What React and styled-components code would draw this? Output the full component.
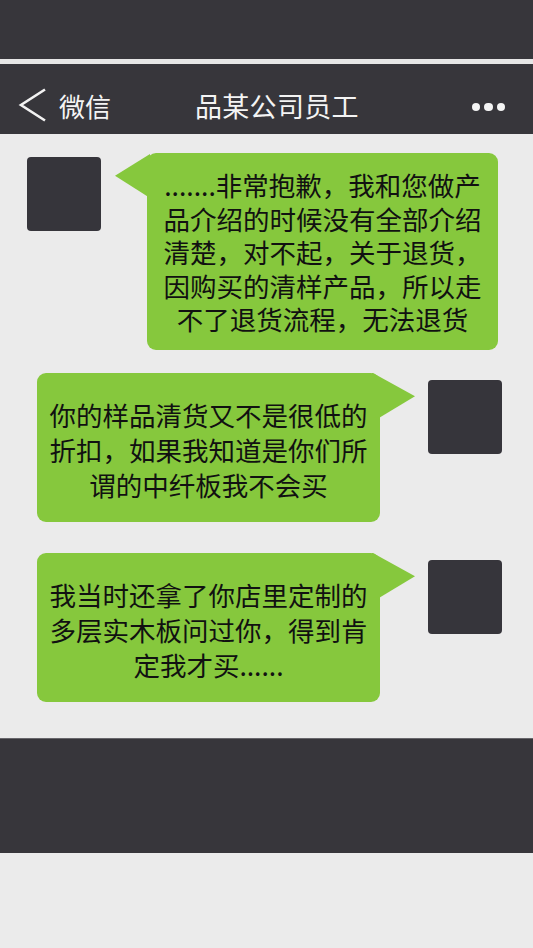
import styled, { createGlobalStyle } from 'styled-components';

const GlobalStyle = createGlobalStyle`
  html, body {
    margin: 0;
    padding: 0;
    background: #ebebeb;
  }
  body {
    font-family: "Noto Sans CJK SC", "Noto Sans", sans-serif;
  }
`

const Screen = styled.div`
  width: 533px;
  height: 948px;
  display: flex;
  flex-direction: column;
  background: #ebebeb;
  overflow: hidden;
`

const StatusBar = styled.div`
  height: 59px;
  background: #37363b;
  border-bottom: 5px solid #e6e6e6;
`

const NavBar = styled.div`
  height: 58px;
  padding: 12px 28px 0 18px;
  display: flex;
  align-items: center;
  background: #37363b;
  color: #f4f4f4;
`

const Back = styled.div`
  display: flex;
  align-items: center;
  gap: 12px;
  font-size: 26px;
`

const Title = styled.div`
  margin-left: 84px;
  font-size: 27px;
  letter-spacing: 0.3px;
`

const More = styled.div`
  margin-left: auto;
  margin-top: 4px;
  display: flex;
  gap: 4px;
`

const Dot = styled.span`
  width: 8.5px;
  height: 8.5px;
  border-radius: 50%;
  background: #f4f4f4;
`

const Chat = styled.div`
  height: 585px;
  padding-top: 19px;
  display: flex;
  flex-direction: column;
  background: #ebebeb;
`

const Row = styled.div`
  display: flex;
  flex-direction: ${p => (p.$mine ? 'row-reverse' : 'row')};
  align-items: flex-start;
  gap: ${p => (p.$mine ? '48px' : '46px')};
  padding: ${p => (p.$mine ? '0 31px 0 37px' : '0 35px 0 27px')};
  margin-top: ${p => p.$top || 0}px;
`

const Avatar = styled.div`
  flex: none;
  width: 74px;
  height: 74px;
  margin-top: ${p => (p.$mine ? '7px' : '4px')};
  border-radius: 4px;
  background: #36353b;
`

const Bubble = styled.div`
  position: relative;
  flex: 1;
  padding: ${p => (p.$mine ? '24px 8px 20px' : '15px 8px 14px')};
  border-radius: 9px;
  background: #86c83d;
  color: #111;
  font-size: 26.5px;
  line-height: ${p => (p.$mine ? '35px' : '33.5px')};
  text-align: center;
  white-space: nowrap;

  &::before {
    content: '';
    position: absolute;
    background: #86c83d;
    ${p => p.$mine
      ? `
        right: -35px;
        top: 0;
        width: 43px;
        height: 45px;
        clip-path: polygon(0 0, 100% 53%, 18% 100%, 0 100%);
      `
      : `
        left: -32px;
        top: 1px;
        width: 35px;
        height: 42px;
        clip-path: polygon(100% 0, 0 52%, 91% 100%, 100% 100%);
      `}
  }
`

const BottomBar = styled.div`
  height: 114px;
  background: #37363b;
  border-top: 1px solid #67666b;
`

const messages = [
  {
    mine: false,
    top: 0,
    lines: [
      '.......非常抱歉，我和您做产',
      '品介绍的时候没有全部介绍',
      '清楚，对不起，关于退货，',
      '因购买的清样产品，所以走',
      '不了退货流程，无法退货',
    ],
  },
  {
    mine: true,
    top: 23,
    lines: ['你的样品清货又不是很低的', '折扣，如果我知道是你们所', '谓的中纤板我不会买'],
  },
  {
    mine: true,
    top: 31,
    lines: ['我当时还拿了你店里定制的', '多层实木板问过你，得到肯', '定我才买......'],
  },
]

const Chevron = () => (
  <svg width="29" height="34" viewBox="0 0 29 34">
    <path d="M27 1.5 L3 17 L27 32.5" fill="none" stroke="#f2f2f2" strokeWidth="2.6" />
  </svg>
)

export default function App() {
  return (
    <Screen>
      <GlobalStyle />
      <StatusBar />
      <NavBar>
        <Back>
          <Chevron />
          <span>微信</span>
        </Back>
        <Title>品某公司员工</Title>
        <More>
          <Dot />
          <Dot />
          <Dot />
        </More>
      </NavBar>
      <Chat>
        {messages.map((m, i) => (
          <Row key={i} $mine={m.mine} $top={m.top}>
            <Avatar $mine={m.mine} />
            <Bubble $mine={m.mine}>
              {m.lines.map((line, j) => (
                <div key={j}>{line}</div>
              ))}
            </Bubble>
          </Row>
        ))}
      </Chat>
      <BottomBar />
    </Screen>
  );
}
